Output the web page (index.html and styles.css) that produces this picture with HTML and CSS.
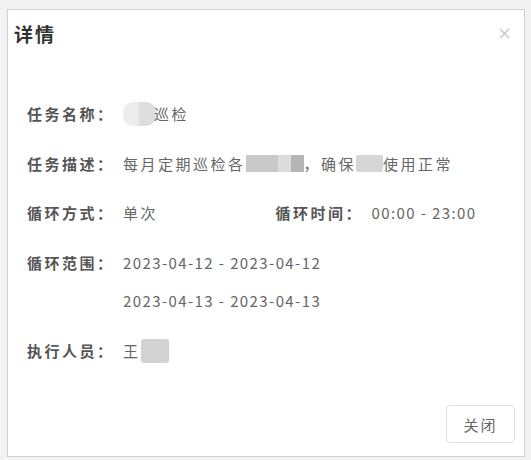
FILE: index.html
```html
<!DOCTYPE html>
<html lang="zh-CN">
<head>
  <meta charset="UTF-8" />
  <meta name="viewport" content="width=device-width, initial-scale=1.0"/>
  <title>详情</title>
  <link rel="stylesheet" href="styles.css">
</head>
<body>
  <div class="dialog">
    <div class="dialog-header">
      <span class="dialog-title">详情</span>
      <svg class="dialog-close" width="11" height="11" viewBox="0 0 11 11">
        <path d="M1 1 L10 10 M10 1 L1 10" stroke="#c2c2c2" stroke-width="1.3" fill="none"/>
      </svg>
    </div>

    <div class="dialog-body">
      <div class="row">
        <span class="label">任务名称：</span>
        <span class="value"><span class="mask mask-name"></span>巡检</span>
      </div>

      <div class="row">
        <span class="label">任务描述：</span>
        <span class="value">每月定期巡检各<span class="mask mask-desc"></span>，确保<span class="mask mask-short"></span>使用正常</span>
      </div>

      <div class="row">
        <div class="col">
          <span class="label">循环方式：</span>
          <span class="value">单次</span>
        </div>
        <div class="col">
          <span class="label">循环时间：</span>
          <span class="value num">00:00 - 23:00</span>
        </div>
      </div>

      <div class="row">
        <span class="label">循环范围：</span>
        <div class="value-list">
          <span class="value num">2023-04-12 - 2023-04-12</span>
          <span class="value num">2023-04-13 - 2023-04-13</span>
        </div>
      </div>

      <div class="row">
        <span class="label">执行人员：</span>
        <span class="value">王<span class="mask mask-person"></span></span>
      </div>
    </div>

    <div class="dialog-footer">
      <button class="btn-close">关闭</button>
    </div>
  </div>
</body>
</html>
```

FILE: styles.css
```css
body {
  margin: 0;
  padding: 9px 6px 0 7px;
  background-color: #f3f3f3;
  font-family: "Noto Sans CJK SC", "Noto Sans", sans-serif;
  color: #555;
}

.dialog {
  width: 516px;
  height: 446px;
  background: #fff;
  border: 1px solid #cfcfcf;
  display: flex;
  flex-direction: column;
}

.dialog-header {
  height: 46px;
  padding: 0 14px 0 6px;
  display: flex;
  align-items: center;
  justify-content: space-between;
}

.dialog-title {
  font-size: 19px;
  font-weight: bold;
  letter-spacing: 2px;
  color: #333;
}

.dialog-body {
  padding: 48px 0 0 19px;
  display: flex;
  flex-direction: column;
  gap: 29.6px;
}

.row {
  display: flex;
  align-items: flex-start;
  line-height: 20px;
  font-size: 15px;
  letter-spacing: 2.5px;
}

.col {
  display: flex;
  width: 249px;
}

.label {
  width: 96px;
  flex-shrink: 0;
  font-weight: bold;
  color: #555;
}

.value {
  height: 20px;
  color: #666;
  display: flex;
  align-items: center;
}

.num {
  letter-spacing: 1.4px;
}

.value-list {
  display: flex;
  flex-direction: column;
  gap: 18.4px;
}

.mask {
  display: inline-block;
  background: #d4d4d4;
  border-radius: 3px;
}

.mask-name {
  width: 33px;
  height: 24px;
  margin: -2px -2px -2px 0;
  background: linear-gradient(to right, #ececec 0, #ececec 50%, #dedede 50%);
  border-radius: 10px;
}

.mask-desc {
  width: 58px;
  height: 17px;
  background: linear-gradient(to right, #c9c9c9 0, #c9c9c9 55%, #dcdcdc 55%, #dcdcdc 78%, #b5b5b5 78%);
  border-radius: 0;
}

.mask-short {
  width: 27px;
  height: 17px;
  background: #d6d6d6;
  border-radius: 2px;
}

.mask-person {
  width: 28px;
  height: 24px;
  margin: -2px 0;
  background: #d2d2d2;
}

.dialog-footer {
  margin-top: auto;
  padding: 0 9px 13px 0;
  display: flex;
  justify-content: flex-end;
}

.btn-close {
  width: 69px;
  height: 38px;
  background: #fff;
  border: 1px solid #e2e2e2;
  border-radius: 4px;
  font-family: inherit;
  font-size: 15px;
  letter-spacing: 2px;
  color: #666;
}
```
